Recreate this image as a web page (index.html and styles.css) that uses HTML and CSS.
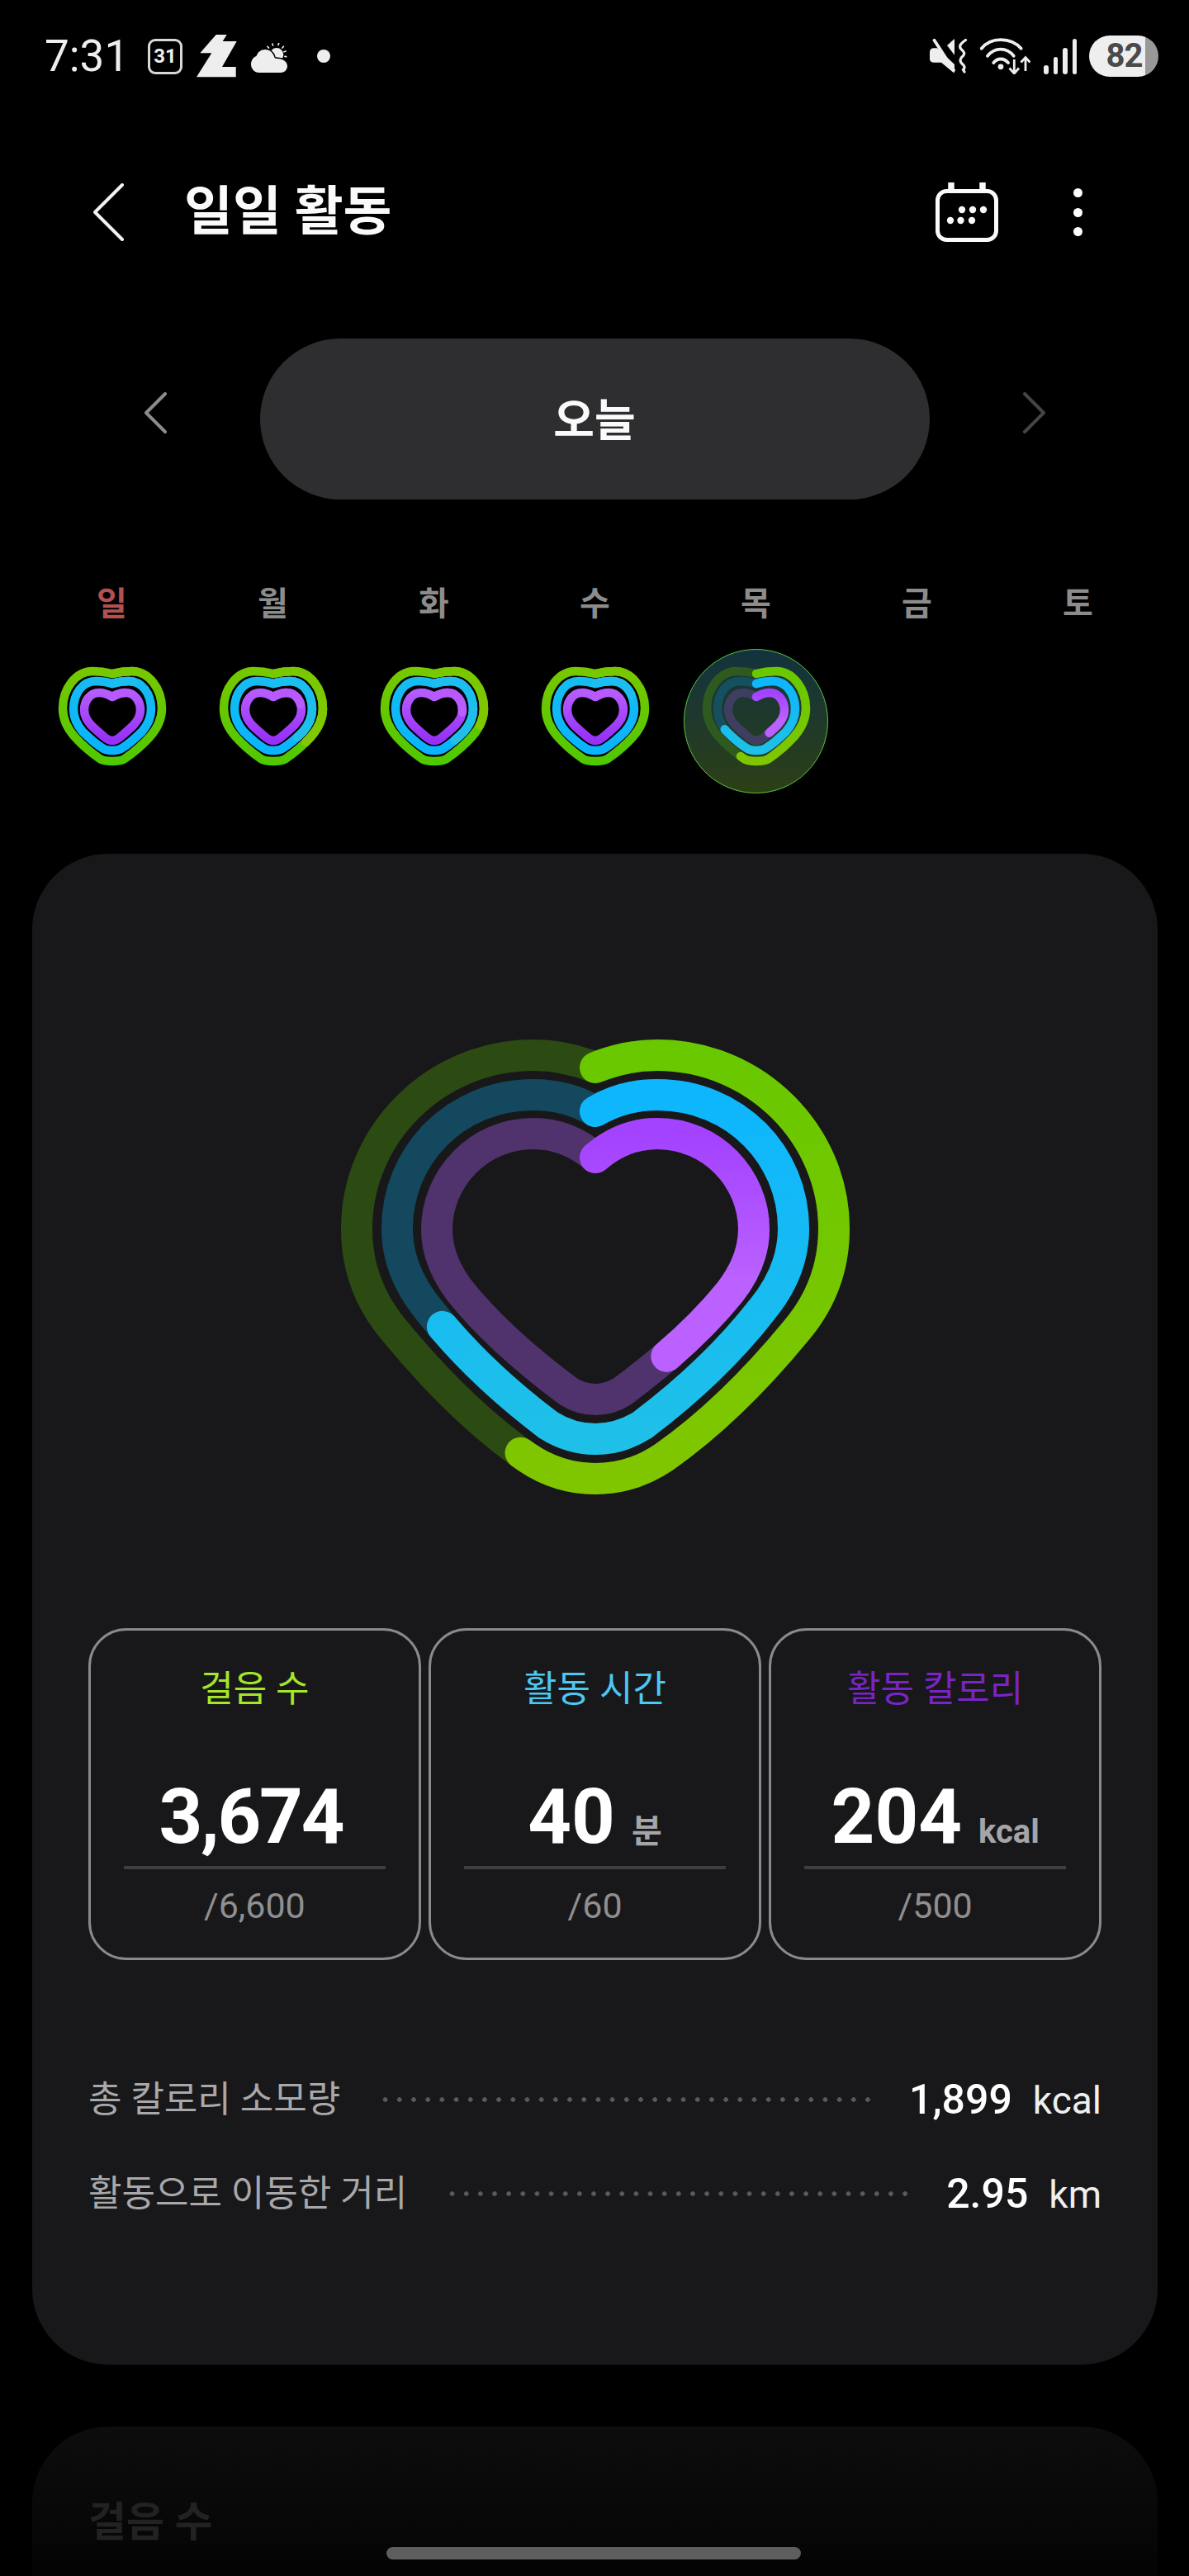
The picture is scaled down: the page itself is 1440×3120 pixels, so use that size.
FILE: index.html
```html
<!DOCTYPE html>
<html lang="ko">
<head>
  <meta charset="UTF-8" />
  <meta name="viewport" content="width=device-width, initial-scale=1.0"/>
  <title>일일 활동</title>
  <link rel="stylesheet" href="styles.css">
</head>
<body>
  <svg class="defs" width="0" height="0">
    <defs>
      <path id="big-green" pathLength="100" d="M0 43C22 34 48 28 75 28C195 28 289 125 289 238C289 288 272 328 243 362C192 424 140 475 83 515C58 532 30 541 0 541C-30 541 -58 532 -83 515C-140 475 -192 424 -243 362C-272 328 -289 288 -289 238C-289 125 -195 28 -75 28C-48 28 -22 34 0 43Z"/>
      <path id="big-blue" pathLength="100" d="M0 96C22 83 48 76 75 76C170 76 240 150 240 238C240 275 225 308 202 336C160 390 110 436 57 476C38 488 20 493 0 493C-20 493 -38 488 -57 476C-110 436 -160 390 -202 336C-225 308 -240 275 -240 238C-240 150 -170 76 -75 76C-48 76 -22 83 0 96Z"/>
      <path id="big-purple" pathLength="100" d="M0 152C22 133 48 123 75 123C142 123 192 178 192 239C192 268 180 293 163 315C125 362 80 400 33 435C22 442 12 445 0 445C-12 445 -22 442 -33 435C-80 400 -125 362 -163 315C-180 293 -192 268 -192 239C-192 178 -142 123 -75 123C-48 123 -22 133 0 152Z"/>
      <path id="small-green" pathLength="100" d="M0 10C8 8 16 7 24 7C44 7 60 28 60 52C60 66 54 77 45 87C36 97 25 106 15 113C10 116 5 116 0 116C-5 116 -10 116 -15 113C-25 106 -36 97 -45 87C-54 77 -60 66 -60 52C-60 28 -44 7 -24 7C-16 7 -8 8 0 10Z"/>
      <path id="small-blue" pathLength="100" d="M0 22C6 20 13 19 20 19C36 19 47 34 47 53C47 64 42 73 36 80C28 88 20 95 12 100C8 103 4 103 0 103C-4 103 -8 103 -12 100C-20 95 -28 88 -36 80C-42 73 -47 64 -47 53C-47 34 -36 19 -20 19C-13 19 -6 20 0 22Z"/>
      <path id="small-purple" pathLength="100" d="M0 38C5 35 10 33 16 33C27 33 34 43 34 54C34 62 30 67 26 72C20 78 14 83 8 88C5 90 3 91 0 91C-3 91 -5 90 -8 88C-14 83 -20 78 -26 72C-30 67 -34 62 -34 54C-34 43 -27 33 -16 33C-10 33 -5 35 0 38Z"/>
      <linearGradient id="grad-green" x1="0" y1="0" x2="0" y2="1"><stop offset="0" stop-color="#69c800"/><stop offset="1" stop-color="#80c600"/></linearGradient>
      <linearGradient id="grad-blue" x1="0" y1="0" x2="0" y2="1"><stop offset="0" stop-color="#0eb6fd"/><stop offset="1" stop-color="#1fc0e8"/></linearGradient>
      <linearGradient id="grad-purple" x1="0" y1="0" x2="0" y2="1"><stop offset="0" stop-color="#a342ff"/><stop offset=".55" stop-color="#ba61ff"/></linearGradient>
      <linearGradient id="base-green" x1="0" y1="0" x2="0" y2="1"><stop offset="0" stop-color="#76c800"/><stop offset="1" stop-color="#50c800"/></linearGradient>
      <linearGradient id="base-blue" x1="0" y1="0" x2="0" y2="1"><stop offset="0" stop-color="#16bcf0"/><stop offset="1" stop-color="#08b4ff"/></linearGradient>
      <linearGradient id="base-purple" x1="0" y1="0" x2="0" y2="1"><stop offset="0" stop-color="#b55cff"/><stop offset="1" stop-color="#9630f8"/></linearGradient>
      <linearGradient id="lap-green" x1="0" y1="0" x2="0" y2="1"><stop offset="0" stop-color="#78c800"/><stop offset="1" stop-color="#86c800"/></linearGradient>
      <linearGradient id="lap-blue" x1="0" y1="0" x2="0" y2="1"><stop offset="0" stop-color="#1cbdf0"/><stop offset="1" stop-color="#20c0e6"/></linearGradient>
      <linearGradient id="lap-purple" x1="0" y1="0" x2="0" y2="1"><stop offset="0" stop-color="#b858ff"/><stop offset="1" stop-color="#be68ff"/></linearGradient>
    </defs>
  </svg>

  <div class="status-bar">
    <div class="status-left">
      <span class="clock">7:31</span>
      <span class="cal-badge">31</span>
      <svg class="ic-z" viewBox="0 0 50 52"><polygon fill="#eee" points="23.700,0 36.700,0 31.700,8 48.700,8 31,39 47.700,39 47.700,51.300 0,51.300 18.300,22.300 4.300,22.300"/></svg>
      <svg class="ic-weather" viewBox="0 0 44 36">
        <circle cx="31" cy="14.300" r="8.300" fill="#eee"/>
        <path fill="#eee" stroke="#000" stroke-width="3" paint-order="stroke" d="M10 36C4 36 0 31 0 26C0 21 3 17 6.500 16C8 11 12 8 17 8C23 8 27 12 28.500 18C30 18.800 31 19 32 19C39 19 44 23 44 28C44 33 40 36 36 36Z"/>
        <path d="M20 4.300L21.500 6M26 1L26.500 3M33.700 .3L33 2.500M39.300 4.300L38 6M42 10L40 10.800M42.700 16.700L41 16.300" stroke="#eee" stroke-width="1.700" stroke-linecap="round" fill="none"/>
      </svg>
      <span class="status-dot"></span>
    </div>
    <div class="status-right">
      <svg class="ic-mute" viewBox="0 0 46 42">
        <path fill="#eee" d="M0 16.300C0 13 2 11.300 5 11.300H9L30 31V40.700H28.500L14 28.700H5C2 28.700 0 27 0 24.700Z"/>
        <path fill="#eee" d="M30 0L21 8L30 19.700Z"/>
        <path d="M5.500 1.800L29 38" stroke="#eee" stroke-width="3.800" stroke-linecap="round" fill="none"/>
        <path d="M43.500 1.500C37 6 35 9 38 12.500C42 16 43 18 40 21C36.500 24 36 27 39 30C42.500 33 43 35 40.500 37.500L42 40" stroke="#eee" stroke-width="3.200" stroke-linecap="round" fill="none"/>
      </svg>
      <svg class="ic-wifi" viewBox="0 0 62 44">
        <g fill="none" stroke="#eee" stroke-width="3.800" stroke-linecap="round">
          <path d="M2.700 12.700C14 -1.500 38 -1.500 50.700 12.700"/>
          <path d="M10 21.700C19 11 33 11 41.700 21.700"/>
          <path d="M17.300 30C22 24 30 24 35 30"/>
        </g>
        <circle cx="26" cy="34.800" r="3.400" fill="#eee"/>
        <path d="M42.300 26V43M36.500 36.500L42.300 43L48 36.500M56 40V23.500M50.500 29.500L56 23.500L61.500 29.500" fill="none" stroke="#eee" stroke-width="2.800"/>
      </svg>
      <div class="signal">
        <span class="bar-1"></span><span class="bar-2"></span><span class="bar-3"></span><span class="bar-4"></span>
      </div>
      <div class="battery"><span class="battery-level">82</span></div>
    </div>
  </div>

  <header class="app-bar">
    <svg class="ic-back" viewBox="0 0 38 70"><path d="M35 2L2 35L35 68" fill="none" stroke="#f2f2f2" stroke-width="4" stroke-linecap="round" stroke-linejoin="round"/></svg>
    <h1>일일 활동</h1>
    <svg class="ic-calendar" viewBox="0 0 76 72">
      <rect x="2.500" y="10.500" width="71" height="59" rx="11" fill="none" stroke="#fafafa" stroke-width="5"/>
      <path d="M19 0V11M57 0V11" stroke="#fafafa" stroke-width="7.500"/>
      <g fill="#fafafa">
        <circle cx="32" cy="33" r="4.200"/><circle cx="45" cy="33" r="4.200"/><circle cx="58" cy="33" r="4.200"/>
        <circle cx="18" cy="46" r="4.200"/><circle cx="30.500" cy="46" r="4.200"/><circle cx="44" cy="46" r="4.200"/>
      </g>
    </svg>
    <div class="kebab"><span></span><span></span><span></span></div>
  </header>

  <div class="date-nav">
    <svg class="chev" viewBox="0 0 30 52"><path d="M26 2L3 25L26 48" fill="none" stroke="#8c8c8c" stroke-width="4" stroke-linecap="round" stroke-linejoin="round"/></svg>
    <div class="date-pill">오늘</div>
    <svg class="chev" viewBox="0 0 30 52"><path d="M4 2L27 25L4 48" fill="none" stroke="#454545" stroke-width="4" stroke-linecap="round" stroke-linejoin="round"/></svg>
  </div>

  <div class="week">
    <div class="day">
      <span class="day-name sunday">일</span>
      <svg class="mini" viewBox="-66 0 132 122">
        <use href="#small-green" stroke="url(#base-green)"/><use href="#small-green" stroke="url(#lap-green)" stroke-dasharray="8 200"/>
        <use href="#small-blue" stroke="url(#base-blue)"/><use href="#small-blue" stroke="url(#lap-blue)" stroke-dasharray="9 200"/>
        <use href="#small-purple" stroke="url(#base-purple)"/><use href="#small-purple" stroke="url(#lap-purple)" stroke-dasharray="8 200"/>
      </svg>
    </div>
    <div class="day">
      <span class="day-name">월</span>
      <svg class="mini" viewBox="-66 0 132 122">
        <use href="#small-green" stroke="url(#base-green)"/><use href="#small-green" stroke="url(#lap-green)" stroke-dasharray="37 200"/>
        <use href="#small-blue" stroke="url(#base-blue)"/><use href="#small-blue" stroke="url(#lap-blue)" stroke-dasharray="38 200"/>
        <use href="#small-purple" stroke="url(#base-purple)"/><use href="#small-purple" stroke="url(#lap-purple)" stroke-dasharray="20 200"/>
      </svg>
    </div>
    <div class="day">
      <span class="day-name">화</span>
      <svg class="mini" viewBox="-66 0 132 122">
        <use href="#small-green" stroke="url(#base-green)"/><use href="#small-green" stroke="url(#lap-green)" stroke-dasharray="30 200"/>
        <use href="#small-blue" stroke="url(#base-blue)"/><use href="#small-blue" stroke="url(#lap-blue)" stroke-dasharray="40 200"/>
        <use href="#small-purple" stroke="url(#base-purple)"/><use href="#small-purple" stroke="url(#lap-purple)" stroke-dasharray="25 200"/>
      </svg>
    </div>
    <div class="day">
      <span class="day-name">수</span>
      <svg class="mini" viewBox="-66 0 132 122">
        <use href="#small-green" stroke="url(#base-green)"/><use href="#small-green" stroke="url(#lap-green)" stroke-dasharray="10 200"/>
        <use href="#small-blue" stroke="url(#base-blue)"/><use href="#small-blue" stroke="url(#lap-blue)" stroke-dasharray="18 200"/>
        <use href="#small-purple" stroke="url(#base-purple)"/><use href="#small-purple" stroke="url(#lap-purple)" stroke-dasharray="4 200"/>
      </svg>
    </div>
    <div class="day">
      <span class="day-name">목</span>
      <div class="today-ring"></div>
      <svg class="mini" viewBox="-66 0 132 122">
        <use href="#small-green" stroke="#2f5a1f"/><use href="#small-green" stroke="url(#grad-green)" stroke-dasharray="55.700 200"/>
        <use href="#small-blue" stroke="#15505f"/><use href="#small-blue" stroke="url(#grad-blue)" stroke-dasharray="66.700 200"/>
        <use href="#small-purple" stroke="#3f3d60"/><use href="#small-purple" stroke="url(#grad-purple)" stroke-dasharray="40.800 200"/>
      </svg>
    </div>
    <div class="day"><span class="day-name">금</span></div>
    <div class="day"><span class="day-name">토</span></div>
  </div>

  <section class="card">
    <svg class="big-heart" viewBox="-310 0 620 570">
      <use href="#big-green" stroke="#2c4b12"/>
      <use href="#big-green" stroke="url(#grad-green)" stroke-dasharray="55.700 200"/>
      <use href="#big-blue" stroke="#14485e"/>
      <use href="#big-blue" stroke="url(#grad-blue)" stroke-dasharray="66.700 200"/>
      <use href="#big-purple" stroke="#50326c"/>
      <use href="#big-purple" stroke="url(#grad-purple)" stroke-dasharray="40.800 200"/>
    </svg>

    <div class="stats">
      <div class="stat">
        <div class="stat-label steps">걸음 수</div>
        <div class="stat-value steps-value">3,674</div>
        <div class="stat-goal">/6,600</div>
      </div>
      <div class="stat">
        <div class="stat-label time">활동 시간</div>
        <div class="stat-value">40<span class="unit">분</span></div>
        <div class="stat-goal">/60</div>
      </div>
      <div class="stat">
        <div class="stat-label kcal">활동 칼로리</div>
        <div class="stat-value">204<span class="unit">kcal</span></div>
        <div class="stat-goal">/500</div>
      </div>
    </div>

    <div class="summary">
      <div class="summary-row">
        <span class="summary-label">총 칼로리 소모량</span>
        <span class="dots"></span>
        <span class="summary-value"><b>1,899</b>kcal</span>
      </div>
      <div class="summary-row">
        <span class="summary-label">활동으로 이동한 거리</span>
        <span class="dots"></span>
        <span class="summary-value"><b>2.95</b>km</span>
      </div>
    </div>
  </section>

  <section class="card-next">
    <h2>걸음 수</h2>
  </section>

  <div class="home-bar"></div>
</body>
</html>
```

FILE: styles.css
```css
* { box-sizing: border-box; }
html, body { margin: 0; padding: 0; }
body { width: 1440px; height: 3120px; overflow: hidden; background: #000; color: #fff; font-family: Roboto, "Noto Sans CJK KR", sans-serif; position: relative; }
.defs { position: absolute; }
use { fill: none; stroke-linecap: round; stroke-linejoin: round; }

.status-bar { height: 136px; padding: 42px 37px 0 54px; display: flex; justify-content: space-between; align-items: flex-start; color: #eee; }
.status-left { display: flex; align-items: center; height: 52px; }
.clock { font-size: 53px; line-height: 52px; width: 125px; }
.cal-badge { width: 42px; height: 43px; border: 3px solid #d8d8d8; border-radius: 9px; font-size: 24px; font-weight: 700; display: flex; align-items: center; justify-content: center; }
.ic-z { width: 50px; height: 52px; margin-left: 17px; }
.ic-weather { width: 44px; height: 36px; margin-left: 16px; margin-top: 4px; }
.status-dot { width: 16px; height: 16px; border-radius: 50%; background: #eee; margin-left: 36px; }
.status-right { display: flex; align-items: center; height: 52px; }
.ic-mute { width: 46px; height: 42px; }
.ic-wifi { width: 62px; height: 44px; margin-left: 14px; }
.signal { display: flex; align-items: flex-end; gap: 6px; height: 44px; margin-left: 16px; }
.signal span { width: 5.500px; background: #eee; border-radius: 3px; }
.bar-1 { height: 11px; }
.bar-2 { height: 21px; }
.bar-3 { height: 32px; }
.bar-4 { height: 43px; }
.battery { width: 84px; height: 50px; margin-left: 15px; border-radius: 25px; overflow: hidden; background: linear-gradient(90deg, #eee 68px, #999 68px); }
.battery-level { display: block; width: 68px; padding-left: 17px; text-align: center; font-size: 40px; letter-spacing: -1px; line-height: 50px; font-weight: 700; color: #4a4a4c; }

.app-bar { height: 184px; margin-top: 29px; padding: 0 129px 0 113px; display: flex; align-items: center; }
.ic-back { width: 38px; height: 70px; }
.app-bar h1 { margin: 0 0 0 72px; font-size: 64px; line-height: 70px; font-weight: 700; color: #fafafa; flex: 1; }
.ic-calendar { width: 76px; height: 72px; }
.kebab { display: flex; flex-direction: column; gap: 12.500px; margin-left: 91px; }
.kebab span { width: 11px; height: 11px; border-radius: 50%; background: #fff; }

.date-nav { height: 195px; margin-top: 61px; display: flex; align-items: center; justify-content: center; gap: 111px; }
.chev { width: 30px; height: 52px; margin-bottom: 14px; }
.date-pill { width: 811px; height: 195px; padding-bottom: 4px; border-radius: 98px; background: #2e2e30; display: flex; align-items: center; justify-content: center; font-size: 54px; font-weight: 700; color: #fafafa; }

.week { display: grid; grid-template-columns: repeat(7, 195px); margin: 102px 0 0 38px; height: 260px; }
.day { position: relative; display: flex; flex-direction: column; align-items: center; }
.day-name { font-size: 40px; line-height: 50px; font-weight: 700; color: #8c8c8c; }
.day-name.sunday { color: #b4504e; }
.mini { width: 132px; height: 122px; margin-top: 49px; position: relative; }
.mini use { stroke-width: 10.500; }
.today-ring { position: absolute; left: 10px; top: 79px; width: 175px; height: 175px; border-radius: 50%; border: 1.500px solid #5ac83c; background: linear-gradient(180deg, #12333f 0%, #2c3f16 100%); }

.card { position: absolute; left: 39px; top: 1034px; width: 1363px; height: 1830px; border-radius: 92px; background: #18181a; padding: 216px 68px 0; }
.big-heart { display: block; width: 620px; height: 570px; margin: 0 auto; }
.big-heart use { stroke-width: 38; }
.stats { display: flex; gap: 9.500px; margin-top: 152px; }
.stat { width: 403px; height: 402px; border: 3.500px solid #8a8a8c; border-radius: 46px; display: flex; flex-direction: column; align-items: center; padding: 39px 40px 0; }
.stat-label { font-size: 44px; line-height: 64px; }
.steps { color: #a4e62a; }
.time { color: #4cc8f4; }
.kcal { color: #7a24c8; }
.stat-value { width: 100%; height: 116.500px; margin-top: 69px; border-bottom: 4px solid #3e3e40; text-align: center; font-size: 92px; line-height: 108px; font-weight: 700; color: #fff; }
.steps-value { padding-right: 9px; letter-spacing: -2.200px; }
.unit { margin-left: 20px; font-size: 40px; line-height: 1; font-weight: 700; color: #a5a5a8; }
.stat-goal { margin-top: 18px; font-size: 43px; line-height: 52px; color: #8f8f91; }

.summary { margin-top: 137px; display: flex; flex-direction: column; gap: 50px; }
.summary-row { display: flex; align-items: center; height: 64px; }
.summary-label { font-size: 44px; line-height: 64px; color: #a8a8aa; }
.dots { flex: 1; height: 8px; margin: 0 41px 0 46px; background: radial-gradient(circle, #5a5a5c 2.500px, transparent 3px) 0 0 / 17px 8px round no-repeat; }
.summary-value { font-size: 46px; color: #efefef; }
.summary-value b { font-size: 50px; font-weight: 500; color: #fff; margin-right: 25px; }

.card-next { position: absolute; left: 39px; top: 2939px; width: 1363px; height: 181px; border-radius: 92px 92px 0 0; background: linear-gradient(180deg, #0d0d0d, #040404); padding: 84px 68px 0; overflow: hidden; }
.card-next h2 { margin: 0; font-size: 50px; line-height: 64px; font-weight: 700; color: #222; }

.home-bar { position: absolute; left: 468px; top: 3085px; width: 502px; height: 15px; border-radius: 8px; background: #5e5e5e; }
```
